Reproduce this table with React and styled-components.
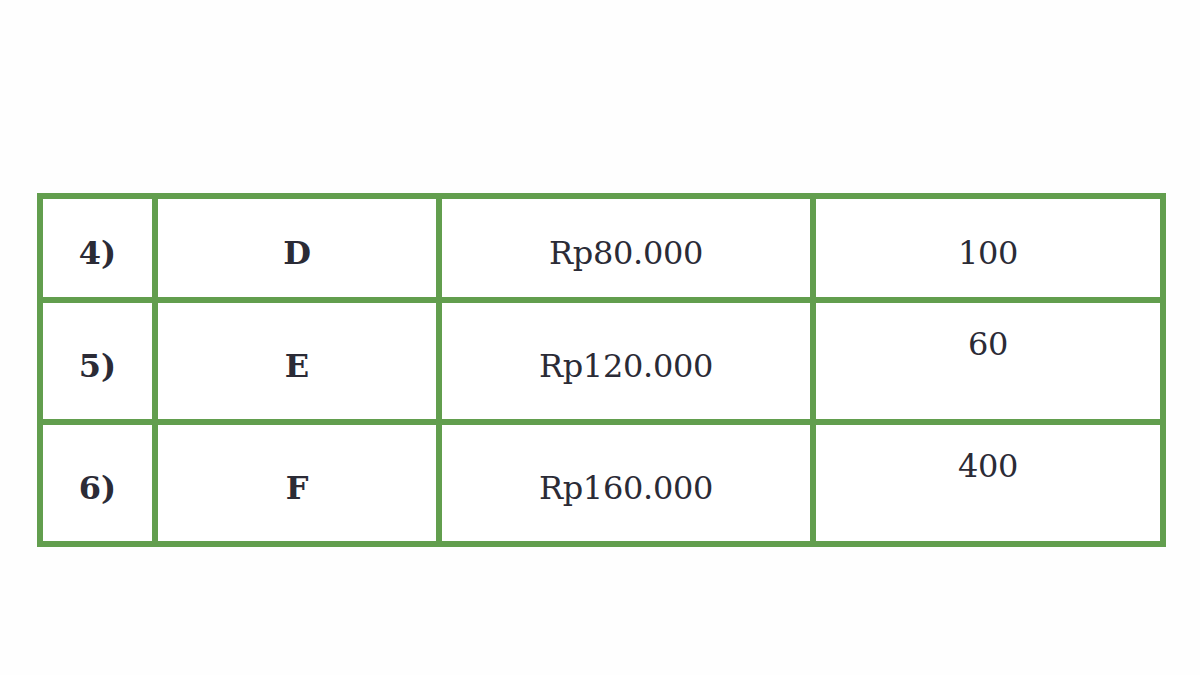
import React from "react";
import styled, { createGlobalStyle } from "styled-components";

const Global = createGlobalStyle`
  html, body { margin: 0; padding: 0; background: #ffffff; }
  body { font-family: "DejaVu Serif", "Liberation Serif", serif; }
`;

const Page = styled.div`
  width: 1200px;
  height: 675px;
  box-sizing: border-box;
  padding: 193px 0 0 37px;
  background: #fefefe;
`;

const Table = styled.div`
  display: grid;
  grid-template-columns: 109px 278px 368px 344px;
  grid-template-rows: 98px 116px 116px;
  gap: 6px;
  padding: 6px;
  width: max-content;
  background: #629e4e;
`;

const Cell = styled.div`
  background: #ffffff;
  display: flex;
  justify-content: center;
  align-items: ${(p) => (p.$top ? "flex-start" : "center")};
  padding-top: ${(p) => (p.$top ? "22px" : "10px")};
  box-sizing: border-box;
  font-family: "DejaVu Serif", "Liberation Serif", serif;
  font-size: 32px;
  line-height: normal;
  font-weight: ${(p) => (p.$bold ? 700 : 400)};
  color: #2b2b36;
  letter-spacing: ${(p) => (p.$bold ? "0" : "-0.3px")};
`;

const rows = [
  { no: "4)", name: "D", price: "Rp80.000", qty: "100", top: false },
  { no: "5)", name: "E", price: "Rp120.000", qty: "60", top: true },
  { no: "6)", name: "F", price: "Rp160.000", qty: "400", top: true },
];

export default function App() {
  return (
    <>
      <Global />
      <Page>
        <Table>
          {rows.map((r) => (
            <React.Fragment key={r.no}>
              <Cell $bold>{r.no}</Cell>
              <Cell $bold>{r.name}</Cell>
              <Cell>{r.price}</Cell>
              <Cell $top={r.top}>{r.qty}</Cell>
            </React.Fragment>
          ))}
        </Table>
      </Page>
    </>
  );
}
